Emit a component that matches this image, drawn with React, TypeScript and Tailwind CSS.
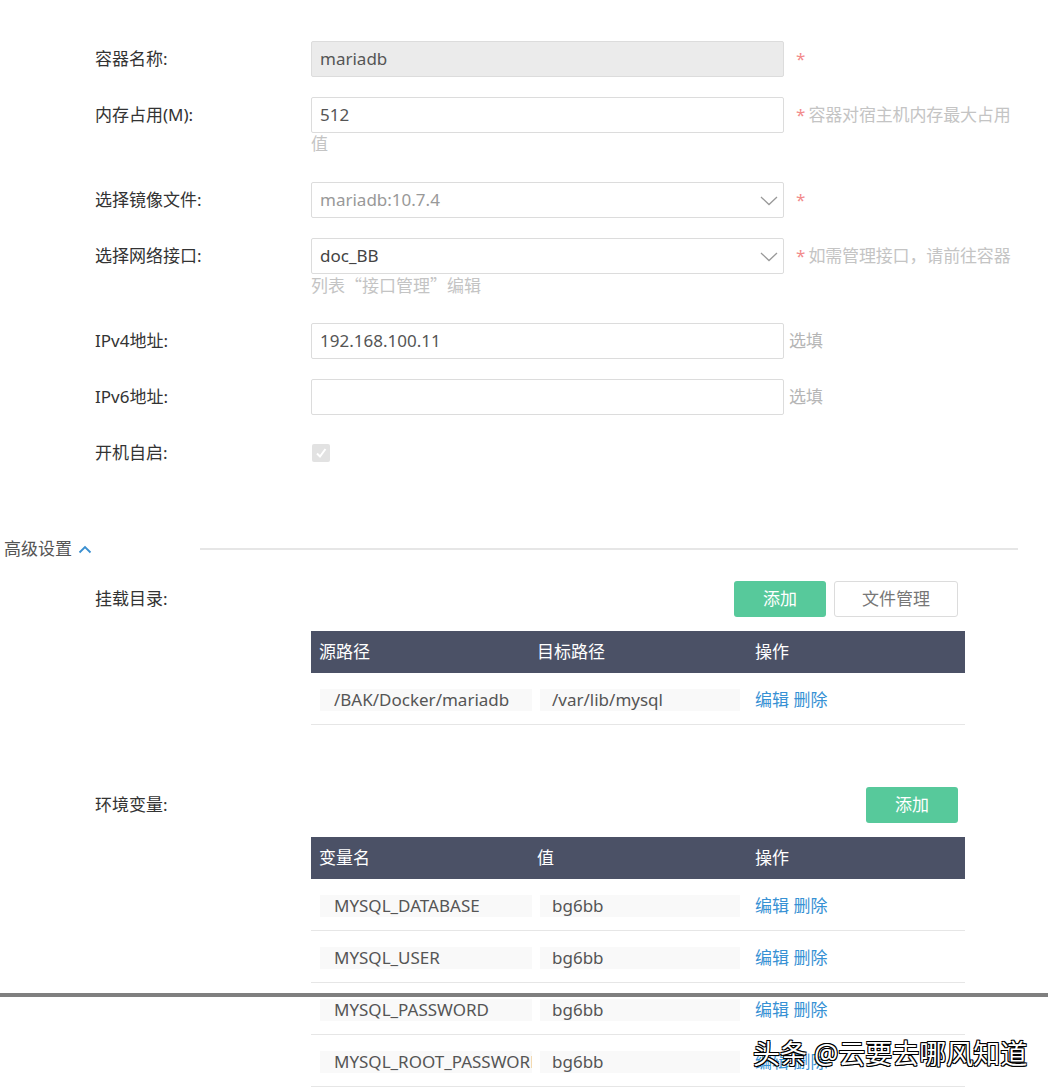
import React from "react";

const font = { fontFamily: '"Noto Sans", "Noto Sans CJK SC", sans-serif' };

function Chevron() {
  return (
    <svg width="18" height="10" viewBox="0 0 18 10" className="absolute right-[5px] top-[13px]">
      <polyline points="1,1 9,8.5 17,1" fill="none" stroke="#999" strokeWidth="1.3" />
    </svg>
  );
}

function Row({ label, children, extra }: { label: string; children: React.ReactNode; extra?: React.ReactNode }) {
  return (
    <div className="flex">
      <div className="w-[216px] h-9 flex items-center text-[#333]">{label}</div>
      <div className="w-[710px]">
        <div className="flex items-center h-9">{children}</div>
        {extra && <div className="h-[29px] leading-[22px] text-[#c4c4c4]">{extra}</div>}
      </div>
    </div>
  );
}

function Star({ hint }: { hint?: string }) {
  return (
    <span className="ml-[12px] text-[#c4c4c4] whitespace-nowrap">
      <span className="text-[#f28b8b]">*</span>
      {hint && <span className="ml-[3px] tracking-[-0.15px]">{hint}</span>}
    </span>
  );
}

const boxCls = "relative w-[473px] h-9 border border-[#dcdcdc] rounded-[2px] pl-[8px] flex items-center";

type Cell = { a: string; b: string };

function DataTable({ heads, rows }: { heads: string[]; rows: Cell[] }) {
  return (
    <div className="w-[654px]">
      <div className="flex h-[42px] bg-[#4b5166] text-white items-center">
        {heads.map((h) => (
          <div key={h} className="w-[218px] pl-[8px]">{h}</div>
        ))}
      </div>
      {rows.map((r) => (
        <div key={r.a} className="flex h-[52px] pt-[2px] items-center border-b border-[#e6e6e6]">
          <div className="w-[218px] pl-[9px]">
            <div className="w-[212px] h-[22px] bg-[#f9f9f9] pl-[14px] pr-[12px] flex items-center overflow-hidden whitespace-nowrap text-[#555]">
              {r.a}
            </div>
          </div>
          <div className="w-[218px] pl-[11px]">
            <div className="w-[200px] h-[22px] bg-[#f9f9f9] pl-[12px] flex items-center text-[#555]">{r.b}</div>
          </div>
          <div className="w-[218px] pl-[8px] text-[#3791d4]">编辑 删除</div>
        </div>
      ))}
    </div>
  );
}

export default function App() {
  return (
    <div className="relative w-[1048px] h-[1090px] overflow-hidden bg-white text-[17px]" style={font}>
      {/* basic form */}
      <div className="pl-[95px] pt-[41px] flex flex-col gap-5">
        <Row label="容器名称:">
          <div className={`${boxCls} bg-[#ebebeb] text-[#555]`}>mariadb</div>
          <Star />
        </Row>
        <Row label="内存占用(M):" extra="值">
          <div className={`${boxCls} text-[#555]`}>512</div>
          <Star hint="容器对宿主机内存最大占用" />
        </Row>
        <Row label="选择镜像文件:">
          <div className={`${boxCls} text-[#999]`}>
            mariadb:10.7.4
            <Chevron />
          </div>
          <Star />
        </Row>
        <Row
          label="选择网络接口:"
          extra={
            <span className="font-['Noto_Sans_CJK_SC',sans-serif]">列表“接口管理”编辑</span>
          }
        >
          <div className={`${boxCls} text-[#444]`}>
            doc_BB
            <Chevron />
          </div>
          <Star hint="如需管理接口，请前往容器" />
        </Row>
        <Row label="IPv4地址:">
          <div className={`${boxCls} text-[#555]`}>192.168.100.11</div>
          <span className="ml-[5px] text-[#b5b5b5]">选填</span>
        </Row>
        <Row label="IPv6地址:">
          <div className={boxCls}></div>
          <span className="ml-[5px] text-[#b5b5b5]">选填</span>
        </Row>
        <Row label="开机自启:">
          <div className="ml-[1px] w-[18px] h-[18px] rounded-[2px] bg-[#e2e2e2] flex items-center justify-center">
            <svg width="12" height="12" viewBox="0 0 12 12">
              <polyline points="2,6.5 5,9.5 10.5,2" fill="none" stroke="#fff" strokeWidth="2" />
            </svg>
          </div>
        </Row>
      </div>

      {/* advanced header */}
      <div className="mt-[66px] h-6 flex items-center pl-[4px] pr-[30px]">
        <span className="text-[#555]">高级设置</span>
        <svg width="14" height="9" viewBox="0 0 14 9" className="ml-[6px]">
          <polyline points="1.5,7.5 7,2 12.5,7.5" fill="none" stroke="#3a8fd0" strokeWidth="1.8" />
        </svg>
        <div className="ml-[108px] flex-1 h-[2px] bg-[#e6e6e6]"></div>
      </div>

      {/* mounts */}
      <div className="pl-[95px] mt-5 flex">
        <div className="w-[216px] h-9 flex items-center text-[#333]">挂载目录:</div>
        <div>
          <div className="flex justify-end gap-2 pr-[7px]">
            <div className="w-[92px] h-9 rounded-[3px] bg-[#57c99b] text-white flex items-center justify-center">添加</div>
            <div className="w-[124px] h-9 rounded-[3px] border border-[#dcdcdc] text-[#777] flex items-center justify-center">文件管理</div>
          </div>
          <div className="mt-[14px]">
            <DataTable heads={["源路径", "目标路径", "操作"]} rows={[{ a: "/BAK/Docker/mariadb", b: "/var/lib/mysql" }]} />
          </div>
        </div>
      </div>

      {/* env */}
      <div className="pl-[95px] mt-[62px] flex">
        <div className="w-[216px] h-9 flex items-center text-[#333]">环境变量:</div>
        <div>
          <div className="flex justify-end pr-[7px]">
            <div className="w-[92px] h-9 rounded-[3px] bg-[#57c99b] text-white flex items-center justify-center">添加</div>
          </div>
          <div className="mt-[14px]">
            <DataTable
              heads={["变量名", "值", "操作"]}
              rows={[
                { a: "MYSQL_DATABASE", b: "bg6bb" },
                { a: "MYSQL_USER", b: "bg6bb" },
                { a: "MYSQL_PASSWORD", b: "bg6bb" },
                { a: "MYSQL_ROOT_PASSWORD", b: "bg6bb" },
              ]}
            />
          </div>
        </div>
      </div>

      {/* stitched screenshot seam */}
      <div className="absolute left-0 top-[993px] w-full h-[4px] bg-[#7f7f7f]"></div>

      {/* watermark */}
      <div className="absolute left-[753px] top-[1034px] text-[27px] text-white whitespace-nowrap [text-shadow:1px_1px_0_#000,-1px_-1px_0_#000,1px_-1px_0_#000,-1px_1px_0_#000,0_1px_0_#000,0_-1px_0_#000]">
        头条 @云要去哪风知道
      </div>
    </div>
  );
}
